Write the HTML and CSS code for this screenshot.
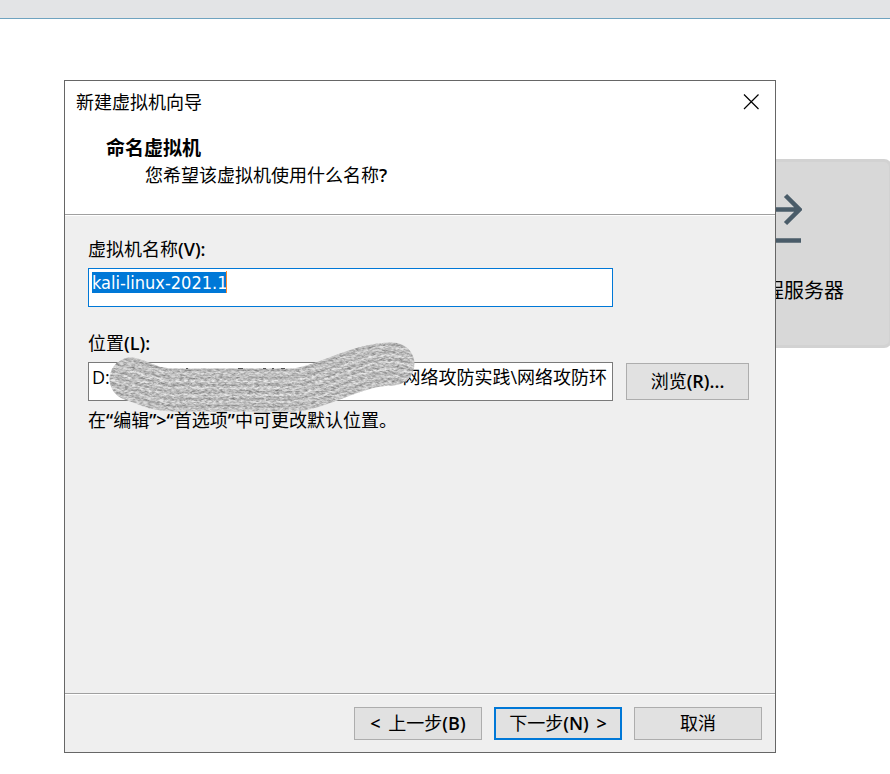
FILE: index.html
```html
<!DOCTYPE html>
<html lang="zh-CN">
<head>
<meta charset="utf-8">
<title>新建虚拟机向导</title>
<link rel="stylesheet" href="styles.css">
</head>
<body>
<div class="toolbar"></div>
<main class="home">
  <a class="card" href="#">
    <svg class="card-icon" width="56" height="56" viewBox="0 0 56 56" fill="none" stroke="#4a5c69" aria-hidden="true">
      <path d="M0 18.500H54M39.500 4.500L53.500 18.500L39.500 32.500" stroke-width="4.500"/>
      <path d="M0 49.500H55" stroke-width="4.500"/>
    </svg>
    <span class="card-label">连接远程服务器</span>
  </a>
</main>

<form class="dialog" role="dialog" aria-labelledby="dialog-title">
  <header class="head">
    <div class="titlebar">
      <span id="dialog-title">新建虚拟机向导</span>
      <button class="close" type="button" aria-label="关闭">
        <svg width="16" height="16" viewBox="0 0 16 16" fill="none" stroke="#000" stroke-width="1.200"><path d="M1 .5L15.500 15M15.500.5L1 15"/></svg>
      </button>
    </div>
    <h1 class="heading">命名虚拟机</h1>
    <p class="question">您希望该虚拟机使用什么名称<b>?</b></p>
  </header>

  <div class="content">
    <label class="label" for="vm-name">虚拟机名称<b>(V):</b></label>
    <div class="row">
      <div class="field">
        <input class="input input-name" id="vm-name" type="text" value="kali-linux-2021.1" autofocus>
        <span class="caret"></span>
      </div>
    </div>
    <label class="label label-next" for="vm-path">位置<b>(L):</b></label>
    <div class="row">
      <div class="field">
        <input class="input" id="vm-path" type="text" value="D:　　　　　　　　　　　　　　　　 网络攻防实践\网络攻防环">
        <svg class="smudge" width="310" height="74" viewBox="108 341 310 74" aria-hidden="true">
          <defs>
            <filter id="grain" filterUnits="userSpaceOnUse" x="100" y="335" width="326" height="86" color-interpolation-filters="sRGB">
              <feTurbulence type="fractalNoise" baseFrequency="0.25 0.6" numOctaves="3" seed="7" result="n"/>
              <feDisplacementMap in="SourceGraphic" in2="n" xChannelSelector="R" yChannelSelector="G" scale="3" result="d"/>
              <feColorMatrix in="n" type="matrix" values="1.400 0 0 0 .06  1.400 0 0 0 .06  1.400 0 0 0 .06  0 0 0 0 .4" result="g"/>
              <feMerge><feMergeNode in="d"/><feMergeNode in="g"/></feMerge>
            </filter>
            <mask id="shape" maskUnits="userSpaceOnUse" x="108" y="341" width="310" height="74">
              <path d="M131 379C148 384 154 390 173 390H292C322 389 355 364 393 364" fill="none" stroke="#fff" stroke-width="43" stroke-linecap="round"/>
            </mask>
            <path id="strand" d="M100 373C137 379 154 390 173 390H292C322 389 355 364 393 364L425 370"/>
          </defs>
          <g mask="url(#shape)">
            <g filter="url(#grain)" fill="none" stroke-width="2">
              <rect x="96" y="331" width="334" height="94" fill="#bcbcbc"/>
              <use href="#strand" y="-20" stroke="#a0a0a0"/>
              <use href="#strand" y="-17" stroke="#ccc"/>
              <use href="#strand" y="-12" stroke="#a2a2a2"/>
              <use href="#strand" y="-9" stroke="#d8d8d8"/>
              <use href="#strand" y="-5" stroke="#9c9c9c"/>
              <use href="#strand" y="-2" stroke="#d8d8d8"/>
              <use href="#strand" y="2" stroke="#a0a0a0"/>
              <use href="#strand" y="5" stroke="#d8d8d8"/>
              <use href="#strand" y="9" stroke="#a0a0a0"/>
              <use href="#strand" y="12" stroke="#d0d0d0"/>
              <use href="#strand" y="16" stroke="#a0a0a0"/>
              <use href="#strand" y="19" stroke="#c8c8c8"/>
            </g>
          </g>
          <path d="M186 368.500h2M238 368.500h5M263 368.500h3M272 368.500h2M281 368.500h4" stroke="#555" fill="none"/>
        </svg>
      </div>
      <button class="button browse" type="button">浏览<b>(R)...</b></button>
    </div>
    <p class="hint">在<b>“</b>编辑<b>”&gt;“</b>首选项<b>”</b>中可更改默认位置。</p>
  </div>

  <footer class="footer">
    <button class="button" type="button"><b class="prev">&lt;</b> 上一步<b>(B)</b></button>
    <button class="button primary" type="submit">下一步<b>(N)</b> <b class="next">&gt;</b></button>
    <button class="button" type="button">取消</button>
  </footer>
</form>
<script src="main.js"></script>
</body>
</html>
```
FILE: styles.css
```css
* { box-sizing: border-box; }

body {
  margin: 0;
  background: #fff;
  color: #000;
  font: 18px/24px "Open Sans", "Noto Sans CJK SC", sans-serif;
  overflow: hidden;
}

b { font-weight: 600; }

.toolbar {
  height: 19px;
  background: #e3e4e6;
  border-bottom: 1px solid #6fa3c0;
}

.home {
  display: flex;
  justify-content: flex-end;
  padding-top: 140px;
}

.card {
  display: flex;
  flex-direction: column;
  align-items: center;
  width: 236px;
  height: 189px;
  margin-right: -2px;
  padding-top: 29px;
  border: 3px solid #d2d2d2;
  border-radius: 8px;
  background: #d8d8d8;
  color: #000;
  text-decoration: none;
}

.card-label {
  margin-top: 30px;
  font-size: 20px;
  line-height: 28px;
}

.dialog {
  position: absolute;
  top: 80px;
  left: 64px;
  width: 80%;
  display: flex;
  flex-direction: column;
  border: 1px solid #666;
  background: #efefef;
}

.head {
  padding-bottom: 26px;
  border-bottom: 1px solid #a0a0a0;
  background: #fff;
}

.titlebar {
  display: flex;
  align-items: center;
  justify-content: space-between;
  height: 42px;
  padding: 0 16px 0 11px;
}

.close {
  display: flex;
  padding: 0;
  border: 0;
  background: none;
}

.heading {
  margin: 13px 0 0 41px;
  font-size: 19px;
  line-height: 24px;
  font-weight: 700;
}

.question {
  margin: 3px 0 0 80px;
  padding-bottom: 1px;
}

.content {
  min-height: 478px;
  padding: 21px 26px 0 23px;
  border-top: 1px solid #fff;
}

.label {
  display: block;
  margin-bottom: 7px;
}

.label-next { margin-top: 24px; }

.row {
  display: flex;
  align-items: center;
  gap: 13px;
  padding-right: 136px;
}

.row:has(.browse) { padding-right: 0; }

.field {
  position: relative;
  flex: 1;
}

.input {
  display: block;
  width: 100%;
  height: 39px;
  padding: 0 3px 12px;
  border: 1px solid #7a7a7a;
  border-radius: 0;
  outline: 0;
  background: #fff;
  color: #000;
  font: inherit;
}

.input-name {
  padding-bottom: 10px;
  border-color: #0078d7;
  font-family: "DejaVu Sans Condensed", "DejaVu Sans", sans-serif;
}

.input::selection {
  background: #0078d7;
  color: #fff;
}

.caret {
  position: absolute;
  top: 3px;
  left: 138px;
  width: 1px;
  height: 22px;
  background: #ff8728;
}

.smudge {
  position: absolute;
  top: -21px;
  left: 20px;
}

.button {
  width: 128px;
  height: 33px;
  padding: 0 0 2px;
  border: 1px solid #adadad;
  border-radius: 0;
  background: #e1e1e1;
  color: #000;
  font: inherit;
}

.browse {
  width: 123px;
  height: 37px;
}

.primary { border: 2px solid #0078d7; }

.prev { margin-right: 3px; }

.next { margin-left: 3px; }

.hint { margin: 7px 0 0; }

.footer {
  display: flex;
  justify-content: flex-end;
  gap: 12px;
  padding: 13px 13px 12px;
  border-top: 1px solid #a0a0a0;
  box-shadow: inset 0 1px #fff;
}
```
FILE: main.js
```js
const nameInput = document.getElementById("vm-name");
nameInput.focus();
nameInput.select();
```
